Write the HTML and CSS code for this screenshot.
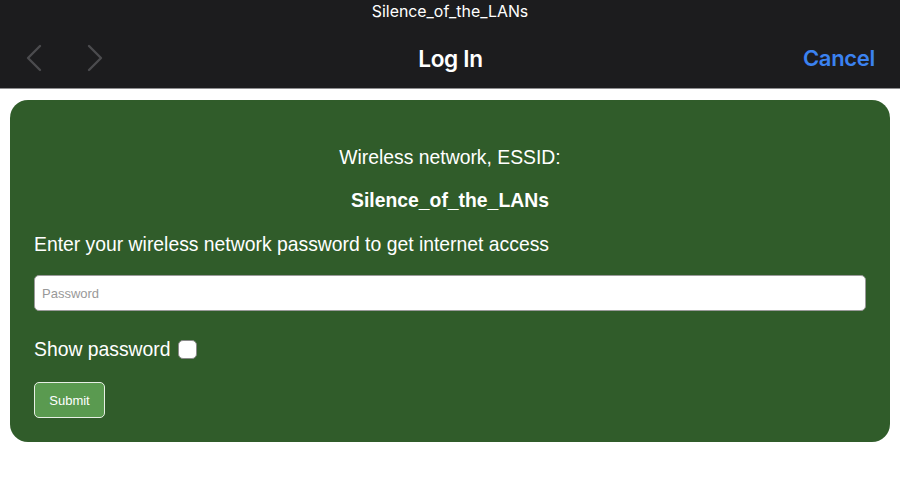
FILE: index.html
```html
<!DOCTYPE html>
<html>
<head>
<meta charset="utf-8">
<link rel="stylesheet" href="styles.css">
</head>
<body>
<header class="bar">
  <div class="site">Silence_of_the_LANs</div>
  <div class="nav">
    <div class="arrows">
      <svg class="chev" width="16" height="28" viewBox="0 0 16 28"><path d="M14 2 L2 14 L14 26" fill="none" stroke="#4b4b4e" stroke-width="2.4" stroke-linecap="round" stroke-linejoin="round"/></svg>
      <svg class="chev" width="16" height="28" viewBox="0 0 16 28"><path d="M2 2 L14 14 L2 26" fill="none" stroke="#4b4b4e" stroke-width="2.4" stroke-linecap="round" stroke-linejoin="round"/></svg>
    </div>
    <div class="title">Log In</div>
    <div class="cancel">Cancel</div>
  </div>
</header>
<main class="page">
  <form class="card">
    <p class="center">Wireless network, ESSID:</p>
    <p class="center ssid">Silence_of_the_LANs</p>
    <p class="lead">Enter your wireless network password to get internet access</p>
    <input class="pw" type="password" placeholder="Password">
    <label class="show">Show password <span class="box"></span></label>
    <button class="submit" type="button">Submit</button>
  </form>
</main>
</body>
</html>
```
FILE: styles.css
```css
* { box-sizing: border-box; }
html, body { margin: 0; padding: 0; background: #fff; }
body { font-family: "Liberation Sans", Arial, sans-serif; width: 900px; height: 486px; overflow: hidden; }
.bar { background: #1c1c1e; height: 89px; border-bottom: 1px solid #8e8e90; color: #fff; }
.site { text-align: center; font-size: 15.9px; padding-top: 2px; height: 30px; font-family: Inter, "Liberation Sans", sans-serif; }
.nav { display: flex; align-items: center; height: 56px; padding: 0 25px 0 26px; position: relative; }
.arrows { display: flex; gap: 45px; width: 200px; }
.title { flex: 1; text-align: center; font-size: 22.6px; font-weight: 600; font-family: Inter, "Liberation Sans", sans-serif; letter-spacing: -0.3px; }
.cancel { width: 200px; text-align: right; font-size: 22px; font-weight: 600; color: #3b82f0; font-family: Inter, "Liberation Sans", sans-serif; letter-spacing: -0.3px; }
.page { padding: 11px 10px 0; }
.card { background: #305c2a; border-radius: 18px; height: 342px; padding: 36px 24px 0; color: #fff; display: flex; flex-direction: column; align-items: flex-start; }
.card p { margin: 0; font-size: 19.35px; }
.center { align-self: stretch; text-align: center; line-height: 42px; }
.ssid { font-weight: bold; line-height: 45px; }
.lead { line-height: 42px; margin-top: 0; }
.pw { align-self: stretch; margin-top: 10px; height: 36px; border: 1px solid #9a9a9a; border-radius: 5px; background: #fff; font-size: 13px; padding: 0 7px; font-family: "Liberation Sans", Arial, sans-serif; }
.pw::placeholder { color: #999; }
.show { margin-top: 27px; font-size: 19.35px; display: flex; align-items: center; gap: 7px; }
.box { width: 19px; height: 19px; background: #fff; border: 1px solid #8a8a8a; border-radius: 5px; display: inline-block; }
.submit { margin-top: 21px; width: 71px; height: 36px; background: #5a9a50; color: #fff; border: 1px solid #e8efe6; border-radius: 5px; font-size: 13px; font-family: "Liberation Sans", Arial, sans-serif; padding: 0; }
```
